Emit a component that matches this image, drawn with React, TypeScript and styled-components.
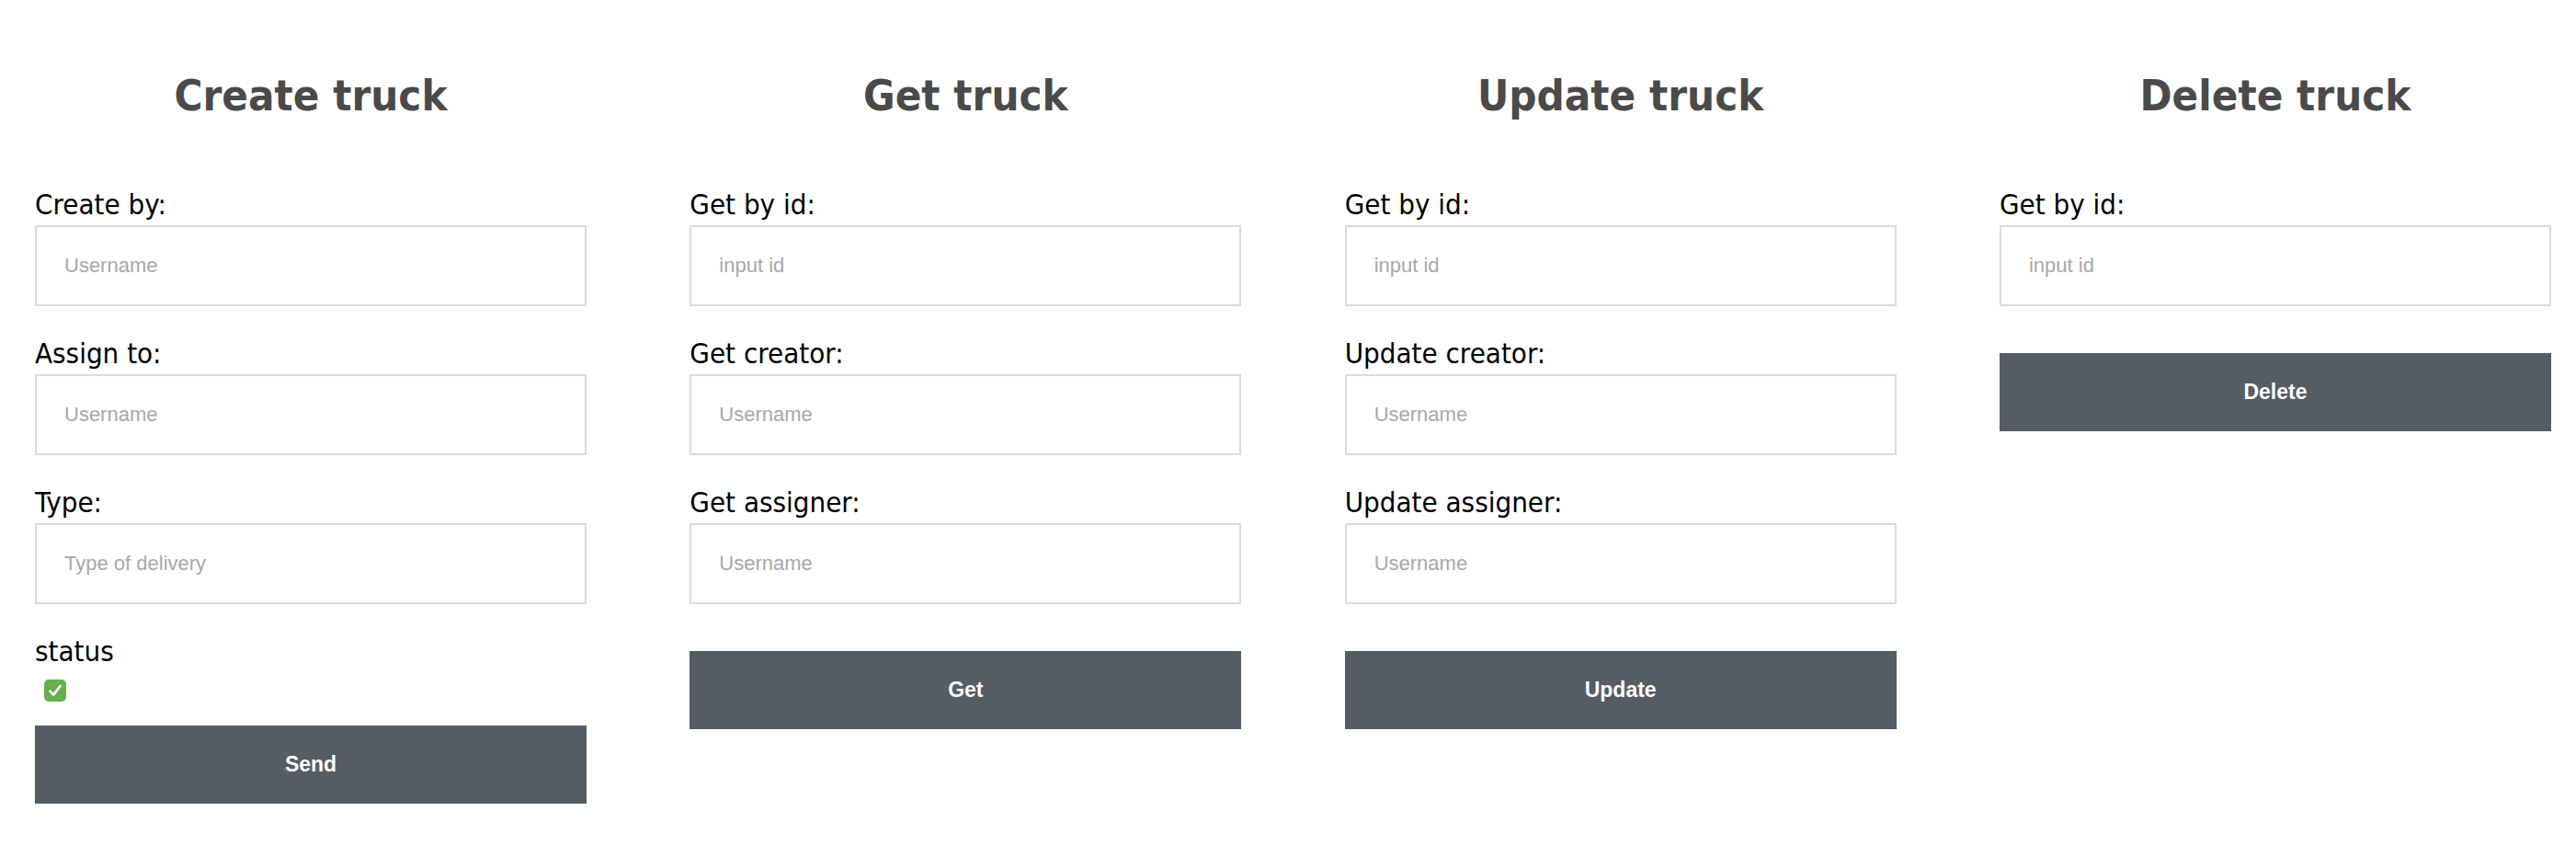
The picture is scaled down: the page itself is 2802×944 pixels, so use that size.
import styled, { createGlobalStyle } from "styled-components";

const GlobalStyle = createGlobalStyle`
  body {
    margin: 0;
    background: #ffffff;
    font-family: "DejaVu Sans Condensed", "DejaVu Sans", sans-serif;
  }
  * {
    box-sizing: border-box;
  }
`;

type FieldData = { label: string; placeholder: string };

type Panel = {
  title: string;
  fields: FieldData[];
  button: string;
  withStatus?: boolean;
};

const panels: Panel[] = [
  {
    title: "Create truck",
    fields: [
      { label: "Create by:", placeholder: "Username" },
      { label: "Assign to:", placeholder: "Username" },
      { label: "Type:", placeholder: "Type of delivery" },
    ],
    button: "Send",
    withStatus: true,
  },
  {
    title: "Get truck",
    fields: [
      { label: "Get by id:", placeholder: "input id" },
      { label: "Get creator:", placeholder: "Username" },
      { label: "Get assigner:", placeholder: "Username" },
    ],
    button: "Get",
  },
  {
    title: "Update truck",
    fields: [
      { label: "Get by id:", placeholder: "input id" },
      { label: "Update creator:", placeholder: "Username" },
      { label: "Update assigner:", placeholder: "Username" },
    ],
    button: "Update",
  },
  {
    title: "Delete truck",
    fields: [{ label: "Get by id:", placeholder: "input id" }],
    button: "Delete",
  },
];

const TruckForm = ({ panel }: { panel: Panel }) => {
  return (
    <Column>
      <Title>{panel.title}</Title>
      <Form onSubmit={(e) => e.preventDefault()}>
        {panel.fields.map((f, i) => (
          <Field key={i}>
            <Label>{f.label}</Label>
            <Input type="text" placeholder={f.placeholder} />
          </Field>
        ))}
        {panel.withStatus && (
          <Field>
            <Label>status</Label>
            <StatusBox>
              <HiddenCheck type="checkbox" defaultChecked />
              <svg width="24" height="24" viewBox="0 0 24 24">
                <rect width="24" height="24" rx="5" fill="#69ae4d" />
                <path
                  d="M6.5 12.5 L10.2 16.8 L17.5 7"
                  fill="none"
                  stroke="#ffffff"
                  strokeWidth="2.6"
                  strokeLinecap="round"
                  strokeLinejoin="round"
                />
              </svg>
            </StatusBox>
          </Field>
        )}
        <SubmitButton type="submit" $spacing={panel.withStatus ? 26 : 51}>
          {panel.button}
        </SubmitButton>
      </Form>
    </Column>
  );
};

const App = () => {
  return (
    <>
      <GlobalStyle />
      <Page>
        {panels.map((p) => (
          <TruckForm key={p.title} panel={p} />
        ))}
      </Page>
    </>
  );
};

const Page = styled.div`
  display: flex;
  justify-content: space-between;
  align-items: flex-start;
  padding: 0 27px 0 38px;
`;

const Column = styled.section`
  display: flex;
  flex-direction: column;
  width: 600px;
`;

const Title = styled.h2`
  margin: 76px 0 0;
  font-size: 47px;
  line-height: 56px;
  font-weight: bold;
  color: #4a4a4a;
  text-align: center;
`;

const Form = styled.form`
  display: flex;
  flex-direction: column;
  margin-top: 72px;
`;

const Field = styled.div`
  display: flex;
  flex-direction: column;

  & + & {
    margin-top: 33px;
  }
`;

const Label = styled.label`
  font-size: 31px;
  line-height: 36px;
  color: #000000;
  margin-bottom: 5px;
`;

const Input = styled.input`
  height: 88px;
  width: 100%;
  border: 2px solid #dcdcdc;
  padding: 0 30px;
  font-family: "Liberation Sans", Arial, sans-serif;
  font-size: 22px;
  color: #333333;
  outline: none;

  &::placeholder {
    color: #a8a8a8;
  }
`;

const StatusBox = styled.label`
  display: flex;
  width: 24px;
  height: 24px;
  margin: 8px 0 0 10px;
`;

const HiddenCheck = styled.input`
  display: none;
`;

const SubmitButton = styled.button<{ $spacing: number }>`
  margin-top: ${(p) => p.$spacing}px;
  height: 85px;
  width: 100%;
  border: none;
  background-color: #555c63;
  color: #ffffff;
  font-family: "Liberation Sans", Arial, sans-serif;
  font-size: 23px;
  font-weight: bold;
  cursor: pointer;
`;

export default App;
